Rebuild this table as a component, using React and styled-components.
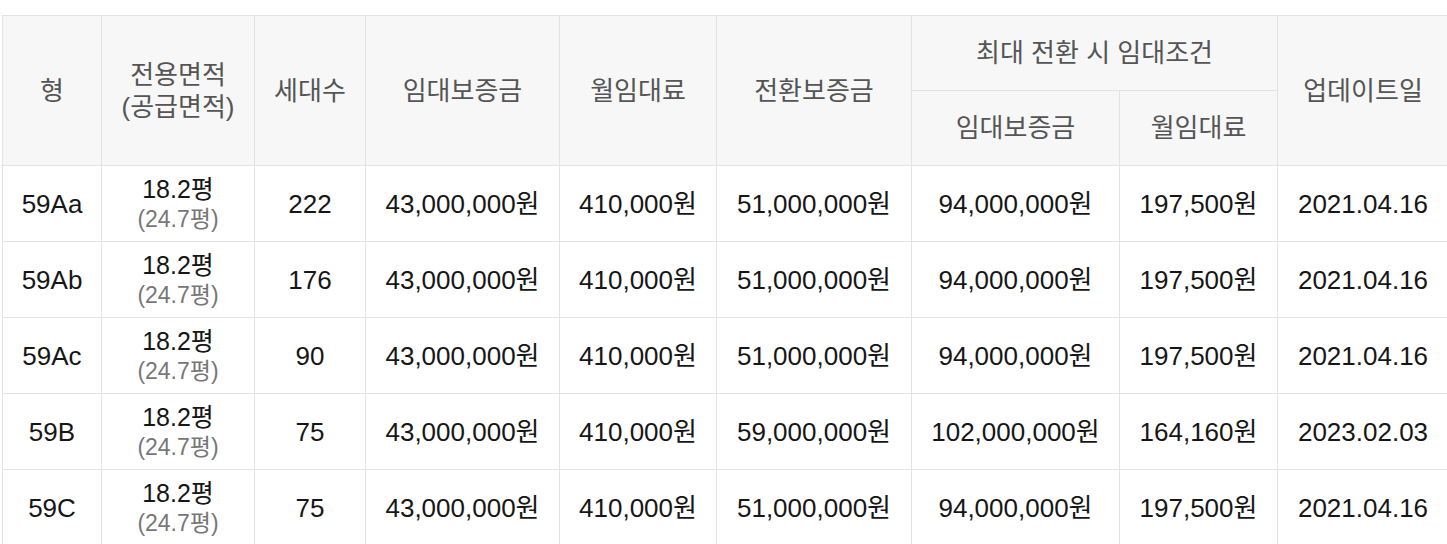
import React from "react"
import styled, { createGlobalStyle } from "styled-components"

const GlobalStyle = createGlobalStyle`
  body {
    margin: 0;
    background: #fff;
    font-family: "Liberation Sans", "Noto Sans CJK KR", sans-serif;
  }
`

const rows = [
  { type: "59Aa", area: "18.2평", supply: "(24.7평)", count: "222", deposit: "43,000,000원", rent: "410,000원", convert: "51,000,000원", maxDeposit: "94,000,000원", maxRent: "197,500원", updated: "2021.04.16" },
  { type: "59Ab", area: "18.2평", supply: "(24.7평)", count: "176", deposit: "43,000,000원", rent: "410,000원", convert: "51,000,000원", maxDeposit: "94,000,000원", maxRent: "197,500원", updated: "2021.04.16" },
  { type: "59Ac", area: "18.2평", supply: "(24.7평)", count: "90", deposit: "43,000,000원", rent: "410,000원", convert: "51,000,000원", maxDeposit: "94,000,000원", maxRent: "197,500원", updated: "2021.04.16" },
  { type: "59B", area: "18.2평", supply: "(24.7평)", count: "75", deposit: "43,000,000원", rent: "410,000원", convert: "59,000,000원", maxDeposit: "102,000,000원", maxRent: "164,160원", updated: "2023.02.03" },
  { type: "59C", area: "18.2평", supply: "(24.7평)", count: "75", deposit: "43,000,000원", rent: "410,000원", convert: "51,000,000원", maxDeposit: "94,000,000원", maxRent: "197,500원", updated: "2021.04.16" },
]

const colWidths = [99, 153, 111, 194, 157, 195, 208, 158, 171]

export default function App() {
  return (
    <>
      <GlobalStyle />
      <Page>
        <Table>
          <colgroup>
            {colWidths.map((w, i) => (
              <col key={i} style={{ width: w }} />
            ))}
          </colgroup>
          <thead>
            <tr>
              <HeadCell rowSpan={2}>형</HeadCell>
              <HeadCell rowSpan={2}>전용면적<br />(공급면적)</HeadCell>
              <HeadCell rowSpan={2}>세대수</HeadCell>
              <HeadCell rowSpan={2}>임대보증금</HeadCell>
              <HeadCell rowSpan={2}>월임대료</HeadCell>
              <HeadCell rowSpan={2}>전환보증금</HeadCell>
              <HeadCell colSpan={2} $h={75}>최대 전환 시 임대조건</HeadCell>
              <HeadCell rowSpan={2}>업데이트일</HeadCell>
            </tr>
            <tr>
              <HeadCell $h={75}>임대보증금</HeadCell>
              <HeadCell>월임대료</HeadCell>
            </tr>
          </thead>
          <tbody>
            {rows.map((r) => (
              <tr key={r.type}>
                <Cell>{r.type}</Cell>
                <Cell>
                  <AreaMain>{r.area}</AreaMain>
                  <AreaSub>{r.supply}</AreaSub>
                </Cell>
                <Cell>{r.count}</Cell>
                <Cell>{r.deposit}</Cell>
                <Cell>{r.rent}</Cell>
                <Cell>{r.convert}</Cell>
                <Cell>{r.maxDeposit}</Cell>
                <Cell>{r.maxRent}</Cell>
                <Cell>{r.updated}</Cell>
              </tr>
            ))}
          </tbody>
        </Table>
      </Page>
    </>
  )
}

const Page = styled.div`
  padding: 15px 0 0 2px;
  overflow: hidden;
`

const Table = styled.table`
  width: 1446px;
  table-layout: fixed;
  border-collapse: collapse;
  border-top: 1px solid #d6d6d6;
`

const HeadCell = styled.th`
  height: ${(p) => (p.$h ? `${p.$h - 1}px` : "auto")};
  padding: 0;
  background: #f7f7f7;
  border: 1px solid #e3e3e3;
  color: #555;
  font-size: 26px;
  font-weight: normal;
  line-height: 32px;
  text-align: center;
  vertical-align: middle;
`

const Cell = styled.td`
  height: 75px;
  padding: 0;
  border: 1px solid #e3e3e3;
  color: #161616;
  font-size: 26px;
  line-height: 30px;
  text-align: center;
  vertical-align: middle;
`

const AreaMain = styled.div`
  font-size: 25px;
  line-height: 30px;
  color: #161616;
`

const AreaSub = styled.div`
  font-size: 23px;
  line-height: 30px;
  color: #777;
`
